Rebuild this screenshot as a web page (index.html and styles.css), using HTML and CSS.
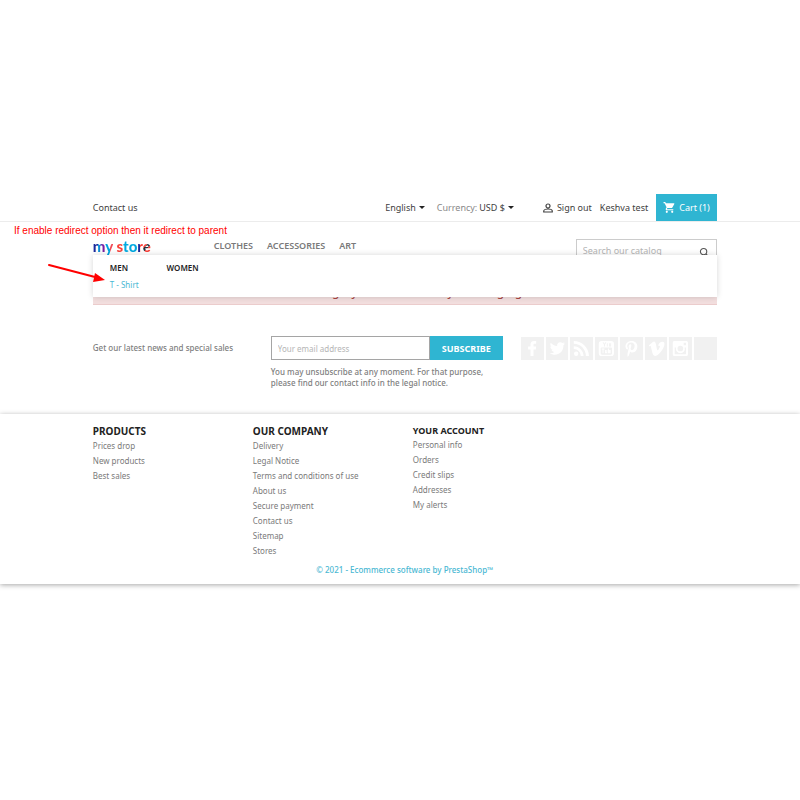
FILE: index.html
```html
<!DOCTYPE html>
<html lang="en">
<head>
    <meta charset="UTF-8">
    <meta name="viewport" content="width=device-width, initial-scale=1.0">
    <title>my store</title>
    <link rel="stylesheet" href="styles.css">
</head>
<body>
    <div class="page">
        <nav class="topbar">
            <div class="container topbar-row">
                <a class="contact" href="#">Contact us</a>
                <button class="picker language" type="button">English <span class="caret"></span></button>
                <div class="currency">
                    <span class="muted">Currency:</span>
                    <button class="picker" type="button">USD $ <span class="caret"></span></button>
                </div>
                <a class="sign-out" href="#">
                    <svg class="icon-user" viewBox="0 0 24 24"><path fill="none" stroke="currentColor" stroke-width="2.4" d="M12 4a4 4 0 1 1 0 8a4 4 0 1 1 0-8zM3.500 20v-2c0-2.500 5-4 8.500-4s8.500 1.500 8.500 4v2z"/></svg>
                    Sign out
                </a>
                <a class="account" href="#">Keshva test</a>
                <a class="cart" href="#">
                    <svg class="icon-cart" viewBox="0 0 24 24"><path fill="currentColor" d="M7 18c-1.100 0-1.990.9-1.990 2S5.900 22 7 22s2-.9 2-2-.9-2-2-2zM1 2v2h2l3.600 7.590-1.350 2.450c-.16.28-.25.61-.25.96 0 1.100.9 2 2 2h12v-2H7.420c-.14 0-.25-.11-.25-.25l.03-.12.9-1.630h7.450c.75 0 1.410-.41 1.750-1.030l3.580-6.490A1 1 0 0 0 20 4H5.210l-.94-2H1zm16 16c-1.100 0-1.990.9-1.990 2s.89 2 1.990 2 2-.9 2-2-.9-2-2-2z"/></svg>
                    Cart (1)
                </a>
            </div>
        </nav>

        <header class="header">
            <div class="container header-row">
                <a class="logo" href="#"><span class="navy">m</span><span class="cyan-red">y</span> <span class="red">s</span><span class="cyan">to</span><span class="navy-red">r</span><span class="red-dark">e</span></a>
                <ul class="menu">
                    <li><a href="#">CLOTHES</a></li>
                    <li><a href="#">ACCESSORIES</a></li>
                    <li><a href="#">ART</a></li>
                </ul>
                <form class="search">
                    <input type="text" placeholder="Search our catalog" aria-label="Search our catalog">
                    <button type="button" aria-label="Search">
                        <svg viewBox="0 0 12 12"><circle cx="5.500" cy="5.500" r="3.800"/><path d="M8.300 8.300L11 11"/></svg>
                    </button>
                </form>
                <div class="submenu">
                    <div class="submenu-col">
                        <a class="submenu-title" href="#">MEN</a>
                        <a class="submenu-link" href="#">T - Shirt</a>
                    </div>
                    <div class="submenu-col">
                        <a class="submenu-title" href="#">WOMEN</a>
                    </div>
                </div>
            </div>
        </header>

        <div class="container">
            <p class="alert">The category is unavailable by exchanging.</p>
        </div>

        <section class="container newsletter">
            <label class="newsletter-label" for="email">Get our latest news and special sales</label>
            <form class="newsletter-form">
                <div class="newsletter-fields">
                    <input type="email" id="email" placeholder="Your email address">
                    <button type="button">SUBSCRIBE</button>
                </div>
                <p>You may unsubscribe at any moment. For that purpose, please find our contact info in the legal notice.</p>
            </form>
            <ul class="social">
                <li><a href="#" aria-label="Facebook"><svg viewBox="0 0 24 24"><path d="M10 20v-7H7.500v-3H10V8c0-3 1.500-4 4-4h2v3h-1.500c-1 0-1.300.4-1.300 1.300V10H16l-.4 3h-2.400v7z"/></svg></a></li>
                <li><a href="#" aria-label="Twitter"><svg viewBox="0 0 24 24"><path d="M20 6.800c-.6.3-1.200.5-1.900.6.700-.5 1.200-1.100 1.400-1.900-.6.400-1.300.7-2.100.8a3.400 3.400 0 0 0-5.700 3C9 9.200 6.600 7.900 5 5.900c-.9 1.600-.4 3.500 1 4.500-.5 0-1-.2-1.500-.4 0 1.600 1.100 3 2.700 3.300-.5.100-1 .1-1.500 0 .4 1.300 1.700 2.300 3.200 2.300A6.600 6.600 0 0 1 4 17c5.800 3.600 14.500 1 14.400-8.300.6-.5 1.200-1.100 1.600-1.900z"/></svg></a></li>
                <li><a href="#" aria-label="RSS"><svg viewBox="0 0 24 24"><circle cx="6.500" cy="17.500" r="2.300"/><path d="M4 9.500V12.500c4 0 7.300 3.300 7.300 7.500h3C14.300 14.200 9.700 9.500 4 9.500zM4 4v3c7 0 12.800 5.800 12.800 13H20C20 11.200 12.800 4 4 4z"/></svg></a></li>
                <li><a href="#" aria-label="YouTube"><svg viewBox="0 0 24 24"><path fill-rule="evenodd" d="M7 4h10c2 0 3 1 3 3v10c0 2-1 3-3 3H7c-2 0-3-1-3-3V7c0-2 1-3 3-3zM6 12v5c0 1 .5 1.500 1.500 1.500h9c1 0 1.500-.5 1.500-1.500v-5c0-.7-.5-1-1.500-1h-9c-1 0-1.500.3-1.500 1zM8 5.500l1.500 2.500v2h1V8L12 5.500h-1l-1 1.600-1-1.600zM12.500 6.500v3.500h1V6.500zM14.800 6.500v3.500H17V6.500h-1V9h-.3V6.500z"/><path d="M7 12h3v1H9v4H8v-4H7zM10.500 13.500h1V16h.5v-2.500h1V17h-2.500zM13.700 12h1v1.500h1.800V17h-2.800z"/></svg></a></li>
                <li><a href="#" aria-label="Pinterest"><svg viewBox="0 0 24 24"><path d="M12.300 4C8 4 5.800 6.800 5.800 9.600c0 1.400.6 2.900 1.800 3.400.3.100.4 0 .5-.3l.3-1c0-.2 0-.3-.2-.5-.3-.5-.6-1-.6-1.800 0-2 1.500-3.700 4.200-3.700 2.300 0 3.600 1.400 3.600 3.300 0 2.500-1.100 4.500-2.800 4.500-.9 0-1.600-.7-1.400-1.600.3-1.100.8-2.200.8-3 0-2-2.900-1.700-2.900 1 0 .8.300 1.400.3 1.400L8 17c-.3 1.200 0 2.800.2 4 1-1.200 1.600-2.600 1.900-3.700l.6-2.200c.4.600 1.300 1.100 2.300 1.100 3.200 0 5.300-2.800 5.300-6.500C18.300 6.600 16 4 12.300 4z"/></svg></a></li>
                <li><a href="#" aria-label="Vimeo"><svg viewBox="0 0 24 24"><path d="M4 8.800l4-3.500c1.800-1.400 3-.5 3.500 2.200l1 5c.5 1.900 1 1.900 2 .2 1.300-2 1.800-3.300.7-3.600-.5-.1-1 .1-1.400.3C14.500 6.500 16.200 5 18.500 5c1.800.1 2.300 1.600 1.900 3.500-.9 4.500-5.700 9.600-8 11-2 1.200-3.700.1-4.400-2.200L6.400 11c-.3-1.600-.6-1.900-1.700-1.100z"/></svg></a></li>
                <li><a href="#" aria-label="Instagram"><svg viewBox="0 0 24 24"><path fill-rule="evenodd" d="M6 4h12c1.300 0 2 .7 2 2v12c0 1.300-.7 2-2 2H6c-1.300 0-2-.7-2-2V6c0-1.300.7-2 2-2zM6 11v6.500c0 .3.200.5.500.5h11c.3 0 .5-.2.500-.5V11h-1.500A4.700 4.700 0 1 1 7.500 11zM15.500 6v2.500H18V6zM12 9a3 3 0 1 0 0 6a3 3 0 1 0 0-6z"/></svg></a></li>
                <li><a href="#" aria-label="LinkedIn"></a></li>
            </ul>
        </section>

        <footer class="footer">
            <div class="container footer-row">
                <div class="links">
                    <h3>PRODUCTS</h3>
                    <ul>
                        <li><a href="#">Prices drop</a></li>
                        <li><a href="#">New products</a></li>
                        <li><a href="#">Best sales</a></li>
                    </ul>
                </div>
                <div class="links">
                    <h3>OUR COMPANY</h3>
                    <ul>
                        <li><a href="#">Delivery</a></li>
                        <li><a href="#">Legal Notice</a></li>
                        <li><a href="#">Terms and conditions of use</a></li>
                        <li><a href="#">About us</a></li>
                        <li><a href="#">Secure payment</a></li>
                        <li><a href="#">Contact us</a></li>
                        <li><a href="#">Sitemap</a></li>
                        <li><a href="#">Stores</a></li>
                    </ul>
                </div>
                <div class="links account-links">
                    <h3>YOUR ACCOUNT</h3>
                    <ul>
                        <li><a href="#">Personal info</a></li>
                        <li><a href="#">Orders</a></li>
                        <li><a href="#">Credit slips</a></li>
                        <li><a href="#">Addresses</a></li>
                        <li><a href="#">My alerts</a></li>
                    </ul>
                </div>
            </div>
            <p class="container copyright"><a href="#">© 2021 - Ecommerce software by PrestaShop™</a></p>
        </footer>

        <p class="note">If enable redirect option then it redirect to parent</p>
        <svg class="arrow" viewBox="0 0 60 24"><path d="M2 3L48 15" stroke="#f00" stroke-width="2" stroke-linecap="round"/><path d="M48 11L58 18L46 20z" fill="#f00"/></svg>
    </div>
</body>
</html>
```

FILE: styles.css
```css
* {
    box-sizing: border-box;
    margin: 0;
    padding: 0;
}
body {
    font-family: "Noto Sans", sans-serif;
    font-size: 9px;
    line-height: 14px;
    color: #414141;
    background-color: #fff;
    padding: 194px 0;
}
a {
    color: inherit;
    text-decoration: none;
}
ul {
    list-style: none;
}
button, input {
    font-family: inherit;
    font-size: inherit;
    color: inherit;
    border: none;
    background: none;
    border-radius: 0;
    outline: none;
}
button {
    cursor: pointer;
}
input::placeholder {
    color: #b5b5b5;
    opacity: 1;
}
.page {
    position: relative;
}
.container {
    margin: 0 10.4% 0 11.6%;
}

/* top bar */
.topbar {
    border-bottom: 1px solid #ececec;
}
.topbar-row {
    display: flex;
    align-items: center;
    height: 27px;
}
.contact {
    margin-right: auto;
}
.picker {
    display: flex;
    align-items: center;
    gap: 3px;
}
.caret {
    border: 3px solid transparent;
    border-top-color: #222;
    border-bottom: none;
}
.currency {
    display: flex;
    gap: 2px;
    margin: 0 28px 0 12px;
}
.muted {
    color: #888;
}
.sign-out {
    display: flex;
    align-items: center;
    gap: 3px;
}
.icon-user {
    width: 12px;
    height: 12px;
}
.account {
    margin: 0 8px;
}
.cart {
    display: flex;
    align-items: center;
    gap: 3px;
    height: 27px;
    padding: 0 7px;
    color: #fff;
    background-color: #2fb5d2;
}
.icon-cart {
    width: 13px;
    height: 13px;
}

/* header */
.header-row {
    position: relative;
    display: flex;
    align-items: flex-start;
    height: 33px;
    padding-top: 17px;
}
.logo {
    width: 121px;
    font-family: "Lato", sans-serif;
    font-size: 15px;
    font-weight: 900;
    line-height: 14px;
    white-space: nowrap;
}
.logo span {
    color: transparent;
    background-clip: text;
    -webkit-background-clip: text;
}
.logo .navy {
    background-image: linear-gradient(90deg, #1b2a9c 45%, #00a3e0 45%, #7b1fa2 80%);
}
.logo .cyan-red {
    background-image: linear-gradient(90deg, #00a3e0 60%, #ef4a56 60%);
}
.logo .red {
    background-image: linear-gradient(#f9423a, #f9423a);
}
.logo .cyan {
    background-image: linear-gradient(#00a9e0, #00a9e0);
}
.logo .navy-red {
    background-image: linear-gradient(90deg, #1b2a9c 55%, #f9423a 55%);
}
.logo .red-dark {
    background-image: linear-gradient(135deg, #f9423a 45%, #23323f 45%, #23323f 60%, #f9423a 60%);
}
.menu {
    display: flex;
    gap: 14px;
    margin-right: auto;
    font-weight: 600;
    color: #7a7a7a;
}
.search {
    display: flex;
    align-items: center;
    width: 141px;
    height: 25px;
    border: 1px solid #ccc;
}
.search input {
    flex: 1;
    min-width: 0;
    padding: 0 6px 2px;
}
.search button {
    width: 24px;
    height: 10px;
}
.search svg {
    display: block;
    width: 10px;
    height: 10px;
    margin: 0 auto;
    fill: none;
    stroke: #555;
    stroke-width: 1.3;
}
.submenu {
    position: absolute;
    z-index: 2;
    top: 33px;
    left: 0;
    right: 0;
    display: flex;
    gap: 28px;
    height: 42px;
    padding: 6px 17px;
    font-size: 8px;
    background-color: #fff;
    box-shadow: 0 0 6px rgba(0, 0, 0, 0.16);
}
.submenu-title {
    display: block;
    margin-bottom: 3px;
    font-weight: 600;
    color: #222;
}
.submenu-link {
    color: #4ab8d3;
}

/* redirect message */
.alert {
    height: 50px;
    padding-top: 28px;
    font-size: 12px;
    line-height: 18px;
    text-align: center;
    color: #a94442;
    background-color: #f2dede;
    border-bottom: 1px solid #ebcccc;
}

/* newsletter */
.newsletter {
    display: flex;
    align-items: flex-start;
    padding: 31px 0 26px;
    font-size: 8px;
    font-weight: 500;
    color: #808080;
}
.newsletter-label {
    width: 178px;
    padding-top: 5px;
}
.newsletter-form {
    width: 232px;
    margin-right: auto;
    line-height: 11px;
}
.newsletter-form p {
    margin-top: 6px;
}
.newsletter-fields {
    display: flex;
    height: 24px;
}
.newsletter-fields input {
    flex: 1;
    min-width: 0;
    padding: 0 6px;
    border: 1px solid #a5a5a5;
}
.newsletter-fields button {
    width: 73px;
    font-size: 9px;
    font-weight: 700;
    color: #fff;
    background-color: #2fb5d2;
}
.social {
    display: grid;
    grid-template-columns: repeat(8, 1fr);
    gap: 2px;
    width: 196px;
    padding-top: 1px;
}
.social a {
    display: block;
    height: 23px;
    background-color: #f1f1f1;
}
.social svg {
    display: block;
    width: 100%;
    height: 23px;
    fill: #fff;
}

/* footer */
.footer {
    padding-top: 10px;
    box-shadow: 0 1px 5px rgba(0, 0, 0, 0.35);
}
.footer-row {
    display: flex;
    font-size: 8px;
    color: #7a7a7a;
}
.links {
    width: 160px;
}
.links h3 {
    font-size: 10px;
    font-weight: 700;
    line-height: 14px;
    color: #222;
}
.links li {
    height: 15px;
    line-height: 15px;
}
.account-links h3 {
    font-size: 9px;
    line-height: 13px;
}
.copyright {
    padding: 5px 0 7px;
    font-size: 8px;
    font-weight: 500;
    text-align: center;
    color: #4ab8d3;
}

/* annotation */
.note {
    position: absolute;
    z-index: 3;
    top: 30px;
    left: 14px;
    font-family: "Liberation Sans", Arial, sans-serif;
    font-size: 10px;
    color: #f00;
}
.arrow {
    position: absolute;
    z-index: 3;
    top: 68px;
    left: 47px;
    width: 60px;
    height: 24px;
}
```
